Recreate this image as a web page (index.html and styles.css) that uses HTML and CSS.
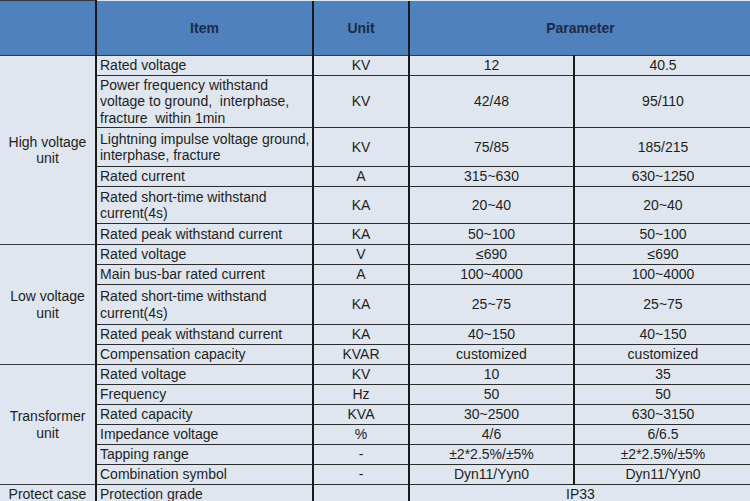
FILE: index.html
```html
<!DOCTYPE html>
<html lang="en">
<head>
<meta charset="utf-8">
<title>Technical parameters</title>
<link rel="stylesheet" href="styles.css">
</head>
<body>
<table class="spec">
  <colgroup>
    <col class="c-group">
    <col class="c-item">
    <col class="c-unit">
    <col class="c-p1">
    <col class="c-p2">
  </colgroup>
  <thead>
    <tr class="head">
      <th class="group"></th>
      <th>Item</th>
      <th>Unit</th>
      <th colspan="2">Parameter</th>
    </tr>
  </thead>
  <tbody>
    <tr class="r1">
      <td class="group" rowspan="6">High voltage<br>unit</td>
      <td class="item">Rated voltage</td>
      <td>KV</td><td>12</td><td class="last">40.5</td>
    </tr>
    <tr class="r3">
      <td class="item">Power frequency withstand voltage to ground,&nbsp; interphase, fracture&nbsp; within 1min</td>
      <td>KV</td><td>42/48</td><td class="last">95/110</td>
    </tr>
    <tr class="r2a">
      <td class="item">Lightning impulse voltage ground, interphase, fracture</td>
      <td>KV</td><td>75/85</td><td class="last">185/215</td>
    </tr>
    <tr class="r1">
      <td class="item">Rated current</td>
      <td>A</td><td>315~630</td><td class="last">630~1250</td>
    </tr>
    <tr class="r2">
      <td class="item">Rated short-time withstand current(4s)</td>
      <td>KA</td><td>20~40</td><td class="last">20~40</td>
    </tr>
    <tr class="r1b">
      <td class="item">Rated peak withstand current</td>
      <td>KA</td><td>50~100</td><td class="last">50~100</td>
    </tr>

    <tr class="r1">
      <td class="group" rowspan="5">Low voltage<br>unit</td>
      <td class="item">Rated voltage</td>
      <td>V</td><td>≤690</td><td class="last">≤690</td>
    </tr>
    <tr class="r1">
      <td class="item">Main bus-bar rated current</td>
      <td>A</td><td>100~4000</td><td class="last">100~4000</td>
    </tr>
    <tr class="r2b">
      <td class="item">Rated short-time withstand current(4s)</td>
      <td>KA</td><td>25~75</td><td class="last">25~75</td>
    </tr>
    <tr class="r1">
      <td class="item">Rated peak withstand current</td>
      <td>KA</td><td>40~150</td><td class="last">40~150</td>
    </tr>
    <tr class="r1">
      <td class="item">Compensation capacity</td>
      <td>KVAR</td><td>customized</td><td class="last">customized</td>
    </tr>

    <tr class="r1">
      <td class="group" rowspan="6">Transformer<br>unit</td>
      <td class="item">Rated voltage</td>
      <td>KV</td><td>10</td><td class="last">35</td>
    </tr>
    <tr class="r1">
      <td class="item">Frequency</td>
      <td>Hz</td><td>50</td><td class="last">50</td>
    </tr>
    <tr class="r1">
      <td class="item">Rated capacity</td>
      <td>KVA</td><td>30~2500</td><td class="last">630~3150</td>
    </tr>
    <tr class="r1">
      <td class="item">Impedance voltage</td>
      <td>%</td><td>4/6</td><td class="last">6/6.5</td>
    </tr>
    <tr class="r1">
      <td class="item">Tapping range</td>
      <td>-</td><td>±2*2.5%/±5%</td><td class="last">±2*2.5%/±5%</td>
    </tr>
    <tr class="r1">
      <td class="item">Combination symbol</td>
      <td>-</td><td>Dyn11/Yyn0</td><td class="last">Dyn11/Yyn0</td>
    </tr>

    <tr class="r1">
      <td class="group">Protect case</td>
      <td class="item">Protection grade</td>
      <td></td><td colspan="2" class="last">IP33</td>
    </tr>
  </tbody>
</table>
</body>
</html>
```

FILE: styles.css
```css
html, body {
  margin: 0;
  padding: 0;
  background: #dfe6ef;
}

.spec {
  border-collapse: collapse;
  table-layout: fixed;
  width: 751px;
  font-family: "Liberation Sans", Arial, sans-serif;
  font-size: 14px;
  line-height: 16.5px;
  color: #1e1e1e;
}

.c-group { width: 96px; }
.c-item  { width: 217px; }
.c-unit  { width: 96px; }
.c-p1    { width: 165px; }
.c-p2    { width: 177px; }

.spec th,
.spec td {
  padding: 0;
  text-align: center;
  vertical-align: middle;
  border-top: 1px solid #2b2b2b;
  border-bottom: 1px solid #2b2b2b;
  border-left: 2px solid #1a1a1a;
  border-right: 2px solid #1a1a1a;
  background: #dfe6ef;
}

.spec .group {
  border-left: none;
  border-top: 1px solid #3a3a3a;
  border-bottom: 1px solid #3a3a3a;
}

.spec .last {
  border-right: none;
}

.head th {
  height: 54px;
  background: #4f81bd;
  color: #1b2a48;
  font-weight: bold;
  border-top: none;
  border-bottom: 1px solid #2b3a55;
}

.head th:last-child {
  border-right: none;
}

.spec td.item {
  text-align: left;
  padding: 0 1px 0 3px;
}

.r1 td  { height: 19px; }
.r1b td { height: 20px; }
.r2 td  { height: 36px; }
.r2a td { height: 38px; }
.r2b td { height: 39px; }
.r3 td  { height: 51px; }
```
